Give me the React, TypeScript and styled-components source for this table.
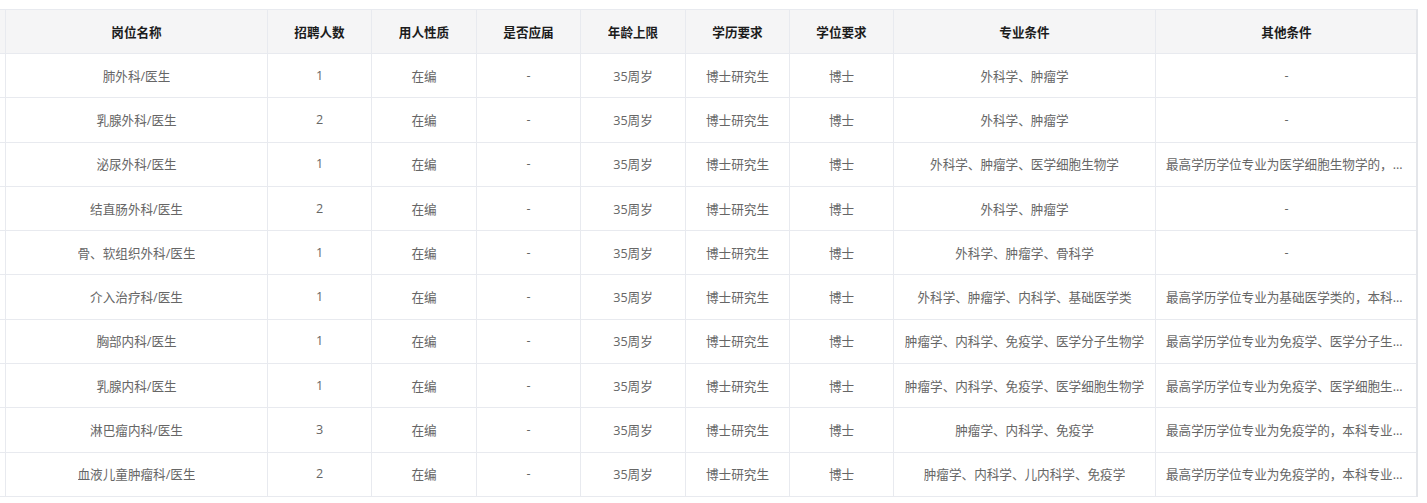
import React from "react";
import styled, { createGlobalStyle } from "styled-components";

const GlobalStyle = createGlobalStyle`
  html, body { margin: 0; padding: 0; background: #fff; }
  body { font-family: "Open Sans", "Noto Sans CJK SC", sans-serif; }
`;

const COLS = "6px 262px 104px 105px 104px 105px 104px 104px 262px 262px";
const BORDER = "#e8eaef";

const Wrapper = styled.div`
  margin-top: 9px;
  width: 1418px;
  border-top: 1px solid ${BORDER};
  border-right: 2px solid #e4e6ea;
  box-sizing: border-box;
  overflow: hidden;
`;

const Row = styled.div<{ $header?: boolean }>`
  display: grid;
  grid-template-columns: ${COLS};
  height: ${(p) => (p.$header ? "44px" : "44.3px")};
  background: ${(p) => (p.$header ? "#f5f5f6" : "#fff")};
`;

const Cell = styled.div<{ $header?: boolean }>`
  box-sizing: border-box;
  display: flex;
  align-items: center;
  justify-content: center;
  min-width: 0;
  padding: 0 10px 1px 10px;
  border-right: 1px solid ${BORDER};
  border-bottom: 1px solid ${BORDER};
  font-size: 12.6px;
  font-weight: ${(p) => (p.$header ? 700 : 400)};
  color: ${(p) => (p.$header ? "#1c1c1c" : "#666")};
`;

const Stub = styled.div`
  box-sizing: border-box;
  border-right: 1px solid ${BORDER};
  border-bottom: 1px solid ${BORDER};
`;

const Text = styled.span`
  min-width: 0;
  overflow: hidden;
  text-overflow: ellipsis;
  white-space: nowrap;
`;

const headers = [
  "岗位名称",
  "招聘人数",
  "用人性质",
  "是否应届",
  "年龄上限",
  "学历要求",
  "学位要求",
  "专业条件",
  "其他条件",
];

type R = [string, string, string, string];

const rows: R[] = [
  ["肺外科/医生", "1", "外科学、肿瘤学", "-"],
  ["乳腺外科/医生", "2", "外科学、肿瘤学", "-"],
  ["泌尿外科/医生", "1", "外科学、肿瘤学、医学细胞生物学", "最高学历学位专业为医学细胞生物学的，本科专业须为临床医学"],
  ["结直肠外科/医生", "2", "外科学、肿瘤学", "-"],
  ["骨、软组织外科/医生", "1", "外科学、肿瘤学、骨科学", "-"],
  ["介入治疗科/医生", "1", "外科学、肿瘤学、内科学、基础医学类", "最高学历学位专业为基础医学类的，本科专业须为临床医学"],
  ["胸部内科/医生", "1", "肿瘤学、内科学、免疫学、医学分子生物学", "最高学历学位专业为免疫学、医学分子生物学的，本科专业须为临床医学"],
  ["乳腺内科/医生", "1", "肿瘤学、内科学、免疫学、医学细胞生物学", "最高学历学位专业为免疫学、医学细胞生物学的，本科专业须为临床医学"],
  ["淋巴瘤内科/医生", "3", "肿瘤学、内科学、免疫学", "最高学历学位专业为免疫学的，本科专业须为临床医学"],
  ["血液儿童肿瘤科/医生", "2", "肿瘤学、内科学、儿内科学、免疫学", "最高学历学位专业为免疫学的，本科专业须为临床医学"],
];

export default function App() {
  return (
    <>
      <GlobalStyle />
      <Wrapper>
        <Row $header>
          <Stub />
          {headers.map((h) => (
            <Cell $header key={h}>
              <Text>{h}</Text>
            </Cell>
          ))}
        </Row>
        {rows.map((r) => {
          const cells = [r[0], r[1], "在编", "-", "35周岁", "博士研究生", "博士", r[2], r[3]];
          return (
            <Row key={r[0]}>
              <Stub />
              {cells.map((c, i) => (
                <Cell key={i}>
                  <Text>{c}</Text>
                </Cell>
              ))}
            </Row>
          );
        })}
      </Wrapper>
    </>
  );
}
